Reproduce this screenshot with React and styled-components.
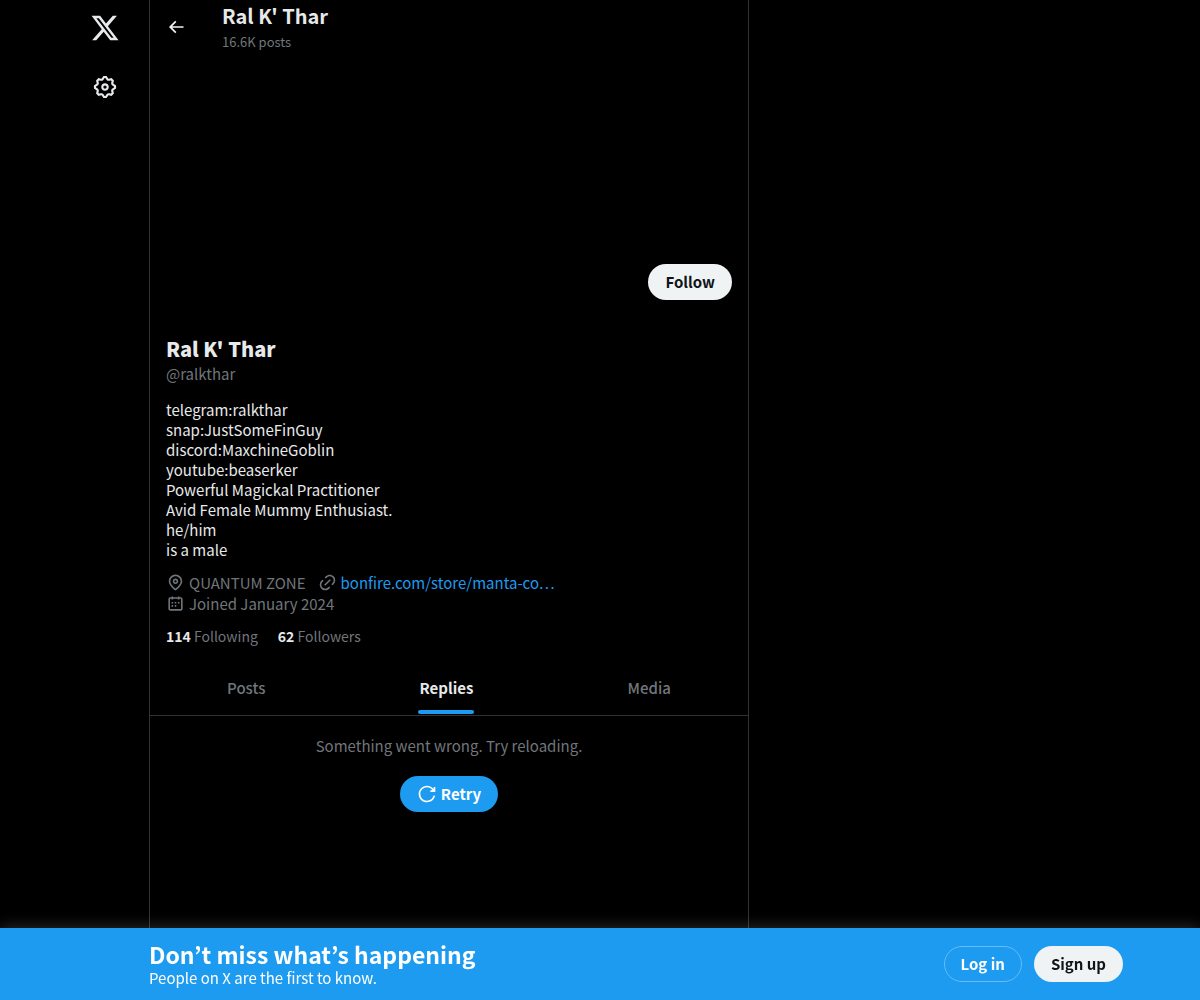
import React, { useState } from "react";
import styled, { createGlobalStyle, css } from "styled-components";

const GlobalStyle = createGlobalStyle`
  * {
    box-sizing: border-box;
  }

  body {
    margin: 0;
    background: #000;
    color: #e7e9ea;
    font-family: "Noto Sans CJK JP", "Noto Sans", sans-serif;
    font-size: 15px;
    line-height: 20px;
  }

  h1, h2, p {
    margin: 0;
  }

  button {
    font-family: inherit;
  }
`;

const icons = {
  logo: "M18.244 2.25h3.308l-7.227 8.26 8.502 11.24H16.17l-5.214-6.817L4.99 21.75H1.68l7.73-8.835L1.254 2.25H8.08l4.713 6.231zm-1.161 17.52h1.833L7.084 4.126H5.117z",
  settings: "M10.54 1.75h2.92l1.57 2.36c.11.17.32.25.53.21l2.53-.59 2.17 2.17-.58 2.54c-.05.2.04.41.21.53l2.36 1.57v2.92l-2.36 1.57c-.17.12-.26.33-.21.53l.58 2.54-2.17 2.17-2.53-.59c-.21-.04-.42.04-.53.21l-1.57 2.36h-2.92l-1.58-2.36c-.11-.17-.32-.25-.52-.21l-2.54.59-2.17-2.17.58-2.54c.05-.2-.03-.41-.21-.53l-2.35-1.57v-2.92L4.1 8.97c.18-.12.26-.33.21-.53L3.73 5.9 5.9 3.73l2.54.59c.2.04.41-.04.52-.21l1.58-2.36zm1.07 2l-.98 1.47C10.05 6.08 9 6.5 7.99 6.27l-1.46-.34-.6.6.33 1.46c.24 1.01-.18 2.07-1.05 2.64l-1.46.98v.78l1.46.98c.87.57 1.29 1.63 1.05 2.64l-.33 1.46.6.6 1.46-.34c1.01-.23 2.06.19 2.64 1.05l.98 1.47h.78l.97-1.47c.58-.86 1.63-1.28 2.65-1.05l1.45.34.61-.6-.34-1.46c-.23-1.01.18-2.07 1.05-2.64l1.47-.98v-.78l-1.47-.98c-.87-.57-1.28-1.63-1.05-2.64l.34-1.46-.61-.6-1.45.34c-1.02.23-2.07-.19-2.65-1.05l-.97-1.47h-.78zM12 10.5c-.83 0-1.5.67-1.5 1.5s.67 1.5 1.5 1.5c.82 0 1.5-.67 1.5-1.5s-.68-1.5-1.5-1.5zM8.5 12c0-1.93 1.56-3.5 3.5-3.5 1.93 0 3.5 1.57 3.5 3.5s-1.57 3.5-3.5 3.5c-1.94 0-3.5-1.57-3.5-3.5z",
  back: "M7.414 13l5.043 5.04-1.414 1.42L3.586 12l7.457-7.46 1.414 1.42L7.414 11H21v2H7.414z",
  location: "M12 7c-1.93 0-3.5 1.57-3.5 3.5S10.07 14 12 14s3.5-1.57 3.5-3.5S13.93 7 12 7zm0 5c-.827 0-1.5-.673-1.5-1.5S11.173 9 12 9s1.5.673 1.5 1.5S12.827 12 12 12zm0-10c-4.687 0-8.5 3.813-8.5 8.5 0 5.967 7.621 11.116 7.945 11.332l.555.37.555-.37c.324-.216 7.945-5.365 7.945-11.332C20.5 5.813 16.687 2 12 2zm0 17.77c-1.665-1.241-6.5-5.196-6.5-9.27C5.5 6.916 8.416 4 12 4s6.5 2.916 6.5 6.5c0 4.073-4.835 8.028-6.5 9.27z",
  link: "M18.36 5.64c-1.95-1.96-5.11-1.96-7.07 0L9.88 7.05 8.46 5.64l1.42-1.42c2.73-2.73 7.16-2.73 9.9 0 2.73 2.74 2.73 7.17 0 9.9l-1.42 1.42-1.41-1.42 1.41-1.41c1.96-1.96 1.96-5.12 0-7.07zm-2.12 3.53l-7.07 7.07-1.41-1.41 7.07-7.07 1.41 1.41zm-12.02.71l1.42-1.42 1.41 1.42-1.41 1.41c-1.96 1.96-1.96 5.12 0 7.07 1.95 1.96 5.11 1.96 7.07 0l1.41-1.41 1.42 1.41-1.42 1.42c-2.73 2.73-7.16 2.73-9.9 0-2.73-2.74-2.73-7.17 0-9.9z",
  calendar: "M7 4V3h2v1h6V3h2v1h1.5C19.89 4 21 5.12 21 6.5v12c0 1.38-1.11 2.5-2.5 2.5h-13C4.12 21 3 19.88 3 18.5v-12C3 5.12 4.12 4 5.5 4H7zm0 2H5.5c-.27 0-.5.22-.5.5v12c0 .28.23.5.5.5h13c.28 0 .5-.22.5-.5v-12c0-.28-.22-.5-.5-.5H17v1h-2V6H9v1H7V6zm0 6h2v-2H7v2zm0 4h2v-2H7v2zm4-4h2v-2h-2v2zm0 4h2v-2h-2v2zm4-4h2v-2h-2v2z",
  retry: "M12 4c-4.418 0-8 3.58-8 8s3.582 8 8 8c3.806 0 6.993-2.66 7.802-6.22l1.95.44C20.742 18.67 16.76 22 12 22 6.477 22 2 17.52 2 12S6.477 2 12 2c3.272 0 6.176 1.57 8 4V3.5h2v6h-6v-2h2.616C17.175 5.39 14.749 4 12 4z",
};

const Svg = styled.svg`
  display: block;
  flex-shrink: 0;
  width: ${(props) => props.$size}px;
  height: ${(props) => props.$size}px;
  fill: currentColor;
`;

const Icon = ({ name, size }) => (
  <Svg $size={size} viewBox="0 0 24 24" aria-hidden="true">
    <path d={icons[name]} />
  </Svg>
);

const Page = styled.div`
  display: flex;
  width: 100%;
  max-width: 1078px;
  min-height: 100vh;
  margin: 0 auto;
`;

const Sidebar = styled.nav`
  display: flex;
  flex-direction: column;
  align-items: center;
  gap: 4px;
  width: 88px;
  flex-shrink: 0;
  padding-top: 2px;
`;

const NavLink = styled.a`
  display: flex;
  align-items: center;
  justify-content: center;
  width: 52px;
  height: ${(props) => (props.$tall ? 58 : 52)}px;
  color: #e7e9ea;
`;

const Column = styled.main`
  flex: 0 1 600px;
  min-width: 0;
  padding-bottom: 72px;
  border-left: 1px solid #2f3336;
  border-right: 1px solid #2f3336;
`;

const TopBar = styled.header`
  display: flex;
  height: 53px;
  padding: 0 16px;
`;

const BackButton = styled.button`
  display: flex;
  align-items: center;
  width: 56px;
  padding: 0;
  border: 0;
  background: none;
  color: #eff3f4;
  cursor: pointer;
`;

const TopTitle = styled.h2`
  font-size: 20px;
  line-height: 32px;
  font-weight: 700;
`;

const PostCount = styled.p`
  color: #71767b;
  font-size: 13px;
  line-height: 20px;
`;

const Banner = styled.div`
  height: 199px;
`;

const Profile = styled.section`
  padding: 12px 16px 16px;
`;

const Actions = styled.div`
  display: flex;
  justify-content: flex-end;
  height: 72px;
`;

const Button = styled.button`
  display: inline-flex;
  align-items: center;
  justify-content: center;
  gap: 4px;
  height: 36px;
  padding: 0 16px;
  border: 1px solid transparent;
  border-radius: 18px;
  background: #eff3f4;
  color: #0f1419;
  font-size: 15px;
  line-height: 20px;
  font-weight: 700;
  cursor: pointer;

  ${(props) =>
    props.$variant === "primary" &&
    css`
      background: #1d9bf0;
      color: #fff;
    `}

  ${(props) =>
    props.$variant === "outline" &&
    css`
      background: transparent;
      border-color: #67bcf6;
      color: #fff;
    `}
`;

const Name = styled.h1`
  font-size: 20px;
  line-height: 26px;
  font-weight: 800;
`;

const Handle = styled.p`
  color: #71767b;
  line-height: 24px;
  margin-bottom: 14px;
`;

const Bio = styled.p`
  white-space: pre-line;
  margin-bottom: 12px;
`;

const Details = styled.div`
  display: flex;
  flex-wrap: wrap;
  column-gap: 12px;
  max-width: 400px;
  color: #71767b;
  line-height: 21px;
  margin-bottom: 12px;
`;

const Detail = styled.span`
  display: flex;
  align-items: center;
  gap: 4px;
`;

const DetailLink = styled.a`
  color: #1d9bf0;
  text-decoration: none;
`;

const Stats = styled.div`
  display: flex;
  gap: 20px;
`;

const Stat = styled.a`
  color: #71767b;
  font-size: 14px;
  text-decoration: none;

  strong {
    color: #e7e9ea;
    font-weight: 700;
  }
`;

const Tabs = styled.div`
  display: flex;
  border-bottom: 1px solid #2f3336;
`;

const Tab = styled.button`
  display: flex;
  flex: 1 1 auto;
  justify-content: center;
  padding: 0;
  border: 0;
  background: none;
  color: ${(props) => (props.$active ? "#e7e9ea" : "#71767b")};
  font-size: 15px;
  line-height: 20px;
  font-weight: ${(props) => (props.$active ? 700 : 500)};
  cursor: pointer;
`;

const TabInner = styled.span`
  position: relative;
  display: flex;
  justify-content: center;
  padding: 16px 0;
  height: 53px;
`;

const Underline = styled.span`
  position: absolute;
  bottom: 1px;
  width: 56px;
  height: 4px;
  border-radius: 2px;
  background: #1d9bf0;
`;

const ErrorState = styled.section`
  display: flex;
  flex-direction: column;
  align-items: center;
  gap: 20px;
  padding: 20px;
  color: #71767b;
`;

const BottomBar = styled.aside`
  position: fixed;
  left: 0;
  right: 0;
  bottom: 0;
  background: #1d9bf0;
  box-shadow: 0 0 15px rgba(255, 255, 255, 0.2);
`;

const BottomInner = styled.div`
  display: flex;
  align-items: center;
  justify-content: space-between;
  max-width: 1078px;
  min-height: 72px;
  margin: 0 auto;
  padding: 12px 16px 12px 88px;
  color: #fff;
`;

const BottomTitle = styled.h2`
  font-size: 23px;
  line-height: 28px;
  font-weight: 700;
`;

const BottomButtons = styled.div`
  display: flex;
  gap: 12px;
`;

const bio = `telegram:ralkthar
snap:JustSomeFinGuy
discord:MaxchineGoblin
youtube:beaserker
Powerful Magickal Practitioner
Avid Female Mummy Enthusiast.
he/him
is a male`;

const tabs = ["Posts", "Replies", "Media"];

export default function App() {
  const [active, setActive] = useState("Replies");

  return (
    <>
      <GlobalStyle />
      <Page>
        <Sidebar>
          <NavLink href="#" aria-label="X">
            <Icon name="logo" size={30} />
          </NavLink>
          <NavLink href="#settings" aria-label="Settings" $tall>
            <Icon name="settings" size={26} />
          </NavLink>
        </Sidebar>

        <Column>
          <TopBar>
            <BackButton aria-label="Back">
              <Icon name="back" size={20} />
            </BackButton>
            <div>
              <TopTitle>Ral K' Thar</TopTitle>
              <PostCount>16.6K posts</PostCount>
            </div>
          </TopBar>
          <Banner />

          <Profile>
            <Actions>
              <Button>Follow</Button>
            </Actions>
            <Name>Ral K' Thar</Name>
            <Handle>@ralkthar</Handle>
            <Bio>{bio}</Bio>
            <Details>
              <Detail>
                <Icon name="location" size={19} />
                QUANTUM ZONE
              </Detail>
              <Detail>
                <Icon name="link" size={19} />
                <DetailLink href="#store">bonfire.com/store/manta-co…</DetailLink>
              </Detail>
              <Detail>
                <Icon name="calendar" size={19} />
                Joined January 2024
              </Detail>
            </Details>
            <Stats>
              <Stat href="#following">
                <strong>114</strong> Following
              </Stat>
              <Stat href="#followers">
                <strong>62</strong> Followers
              </Stat>
            </Stats>
          </Profile>

          <Tabs role="tablist">
            {tabs.map((tab) => (
              <Tab
                key={tab}
                role="tab"
                aria-selected={tab === active}
                $active={tab === active}
                onClick={() => setActive(tab)}
              >
                <TabInner>
                  {tab}
                  {tab === active && <Underline />}
                </TabInner>
              </Tab>
            ))}
          </Tabs>

          <ErrorState>
            <p>Something went wrong. Try reloading.</p>
            <Button $variant="primary">
              <Icon name="retry" size={20} />
              Retry
            </Button>
          </ErrorState>
        </Column>
      </Page>

      <BottomBar>
        <BottomInner>
          <div>
            <BottomTitle>Don’t miss what’s happening</BottomTitle>
            <p>People on X are the first to know.</p>
          </div>
          <BottomButtons>
            <Button $variant="outline">Log in</Button>
            <Button>Sign up</Button>
          </BottomButtons>
        </BottomInner>
      </BottomBar>
    </>
  );
}
